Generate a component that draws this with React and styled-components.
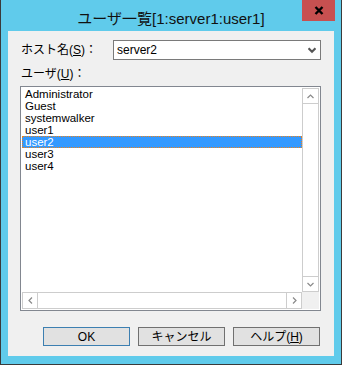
import React from "react";
import styled, { createGlobalStyle } from "styled-components";

const GlobalStyle = createGlobalStyle`
  html, body {
    margin: 0;
    padding: 0;
    background: #ffffff;
  }
  body {
    font-family: "Liberation Sans", "Noto Sans CJK JP", sans-serif;
    font-size: 12px;
    color: #000;
  }
`;

const Window = styled.div`
  position: relative;
  width: 342px;
  height: 365px;
  box-sizing: border-box;
  background: #60cbeb;
  border: 1px solid #3a3a3a;
  border-top: none;
  padding: 0 7px 8px 7px;
  display: flex;
  flex-direction: column;
`;

const TitleBar = styled.div`
  height: 31px;
  display: flex;
  align-items: center;
  justify-content: center;
  padding-top: 3px;
  box-sizing: border-box;
  font-size: 15px;
  color: #111;
`;

const CloseButton = styled.div`
  position: absolute;
  top: 0;
  right: 6px;
  width: 33px;
  height: 21px;
  background: #c75050;
  display: flex;
  align-items: center;
  justify-content: center;
`;

const Client = styled.div`
  flex: 1;
  background: #f0f0f0;
  padding: 9px 13px 0 12px;
  display: flex;
  flex-direction: column;
`;

const FieldRow = styled.div`
  display: flex;
  align-items: center;
  height: 20px;
`;

const Label = styled.div`
  width: ${(p) => p.width || "auto"};
  padding-left: 1px;
  line-height: 14px;
  margin-top: ${(p) => p.top || "0"};
  white-space: nowrap;
`;

const Combo = styled.div`
  width: 208px;
  height: 20px;
  box-sizing: border-box;
  border: 1px solid #7a7a7a;
  background: #fff;
  display: flex;
  align-items: center;
  justify-content: space-between;
  padding: 0 4px 0 3px;
`;

const ListBox = styled.div`
  margin-top: 5px;
  height: 225px;
  box-sizing: border-box;
  border: 1px solid #828790;
  background: #fff;
  padding: 1px;
  display: grid;
  grid-template-columns: 1fr 17px;
  grid-template-rows: 1fr 17px;
`;

const Items = styled.div`
  display: flex;
  flex-direction: column;
`;

const Item = styled.div`
  height: 12px;
  line-height: 10px;
  font-size: 11.5px;
  box-sizing: border-box;
  padding-left: 2px;
  border: 1px ${(p) => (p.selected ? "dotted #e8821e" : "solid transparent")};
  background: ${(p) => (p.selected ? "#3399ff" : "transparent")};
  color: ${(p) => (p.selected ? "#fff" : "#000")};
  white-space: nowrap;
`;

const ScrollBar = styled.div`
  box-sizing: border-box;
  border: 1px solid #cdcdcd;
  display: grid;
  grid-template-${(p) => (p.horizontal ? "columns" : "rows")}: 15px 1fr 15px;
  background: #fff;
`;

const ArrowBox = styled.div`
  display: flex;
  align-items: center;
  justify-content: center;
  border-${(p) => p.side}: 1px solid #cdcdcd;
`;

const Corner = styled.div`
  background: #f0f0f0;
`;

const ButtonRow = styled.div`
  margin-top: 16px;
  display: flex;
  justify-content: flex-end;
  gap: 8px;
  padding-right: 1px;
`;

const Button = styled.div`
  width: 87px;
  height: 19px;
  box-sizing: border-box;
  border: 1px solid ${(p) => (p.primary ? "#3c7fb1" : "#707070")};
  background: #e1e1e1;
  display: flex;
  align-items: center;
  justify-content: center;
  line-height: 14px;
`;

function Chevron({ dir, color = "#8a8a8a", size = 7, weight = 1.2 }) {
  const paths = {
    up: "M0.5 5 L3.5 2 L6.5 5",
    down: "M0.5 2 L3.5 5 L6.5 2",
    left: "M5 0.5 L2 3.5 L5 6.5",
    right: "M2 0.5 L5 3.5 L2 6.5",
  };
  return (
    <svg width={size} height={size} viewBox="0 0 7 7">
      <path d={paths[dir]} fill="none" stroke={color} strokeWidth={weight} />
    </svg>
  );
}

const users = [
  "Administrator",
  "Guest",
  "systemwalker",
  "user1",
  "user2",
  "user3",
  "user4",
];

export default function App() {
  return (
    <>
      <GlobalStyle />
      <Window>
        <TitleBar>ユーザ一覧[1:server1:user1]</TitleBar>
        <CloseButton>
          <svg width="10" height="9" viewBox="0 0 10 9">
            <path d="M1.5 1 L8.5 8 M8.5 1 L1.5 8" stroke="#000" strokeWidth="2.4" />
          </svg>
        </CloseButton>
        <Client>
          <FieldRow>
            <Label width="92px">
              ホスト名(<u>S</u>)：
            </Label>
            <Combo>
              <span>server2</span>
              <Chevron dir="down" color="#555" size={8} weight={1.8} />
            </Combo>
          </FieldRow>
          <Label top="7px">
            ユーザ(<u>U</u>)：
          </Label>
          <ListBox>
            <Items>
              {users.map((u) => (
                <Item key={u} selected={u === "user2"}>
                  {u}
                </Item>
              ))}
            </Items>
            <ScrollBar>
              <ArrowBox side="bottom">
                <Chevron dir="up" />
              </ArrowBox>
              <div />
              <ArrowBox side="top">
                <Chevron dir="down" />
              </ArrowBox>
            </ScrollBar>
            <ScrollBar horizontal>
              <ArrowBox side="right">
                <Chevron dir="left" />
              </ArrowBox>
              <div />
              <ArrowBox side="left">
                <Chevron dir="right" />
              </ArrowBox>
            </ScrollBar>
            <Corner />
          </ListBox>
          <ButtonRow>
            <Button primary>OK</Button>
            <Button>キャンセル</Button>
            <Button>
              ヘルプ(<u>H</u>)
            </Button>
          </ButtonRow>
        </Client>
      </Window>
    </>
  );
}
